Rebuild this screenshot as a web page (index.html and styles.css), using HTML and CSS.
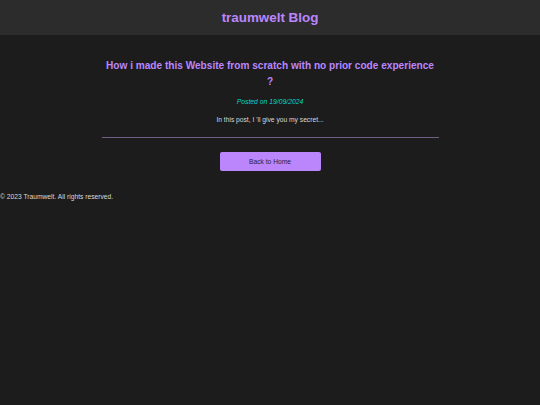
FILE: index.html
```html
<!DOCTYPE html>
<html lang="en">
<head>
<meta charset="utf-8">
<title>traumwelt Blog</title>
<link rel="stylesheet" href="styles.css">
</head>
<body>
<header class="site-header">
  <h1 class="site-title">traumwelt Blog</h1>
</header>
<main class="post">
  <h2 class="post-title">How i made this Website from scratch with no prior code experience ?</h2>
  <p class="post-date">Posted on 19/09/2024</p>
  <p class="post-body">In this post, I 'll give you my secret...</p>
  <hr class="post-rule">
  <div class="post-actions">
    <a class="home-button" href="#">Back to Home</a>
  </div>
</main>
<footer class="site-footer">
  <p class="copyright">© 2023 Traumwelt. All rights reserved.</p>
</footer>
</body>
</html>
```

FILE: styles.css
```css
html, body {
  margin: 0;
  padding: 0;
  background: #1c1c1c;
  font-family: "Liberation Sans", Arial, sans-serif;
  color: #e0e0e0;
}

.site-header {
  height: 35px;
  background: #2c2c2c;
  display: flex;
  align-items: center;
  justify-content: center;
}

.site-title {
  margin: 0;
  font-size: 13.4px;
  font-weight: bold;
  color: #bb86fc;
  line-height: 16px;
}

.post {
  width: 337px;
  margin: 0 auto;
  padding-top: 23px;
  text-align: center;
}

.post-title {
  margin: 0;
  padding: 0 3px;
  font-size: 10.1px;
  line-height: 16px;
  font-weight: bold;
  color: #bb86fc;
}

.post-date {
  margin: 8px 0 0;
  font-size: 6.8px;
  line-height: 8px;
  font-style: italic;
  color: #03dac6;
}

.post-body {
  margin: 10px 0 0;
  font-size: 6.7px;
  line-height: 8px;
  color: #d8d8d8;
}

.post-rule {
  margin: 13px 0 0;
  border: 0;
  height: 1px;
  background: #6f6083;
}

.post-actions {
  display: flex;
  justify-content: center;
  margin-top: 14px;
}

.home-button {
  display: flex;
  align-items: center;
  justify-content: center;
  width: 101px;
  height: 19px;
  box-sizing: border-box;
  background: #bb86fc;
  border-radius: 2px;
  color: #2a1f3a;
  font-size: 6.7px;
  text-decoration: none;
}

.site-footer {
  margin-top: 22px;
}

.copyright {
  margin: 0;
  font-size: 6.7px;
  line-height: 8px;
  color: #d8d8d8;
}
```
